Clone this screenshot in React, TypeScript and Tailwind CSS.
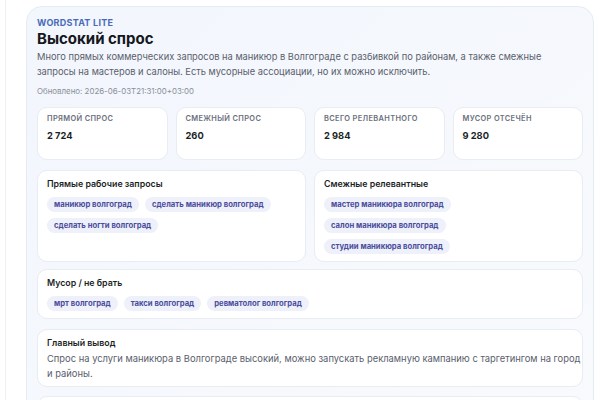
import React from "react";

const stats = [
  { label: "Прямой спрос", value: "2 724" },
  { label: "Смежный спрос", value: "260" },
  { label: "Всего релевантного", value: "2 984" },
  { label: "Мусор отсечён", value: "9 280" },
];

function Chip({ children }: { children: React.ReactNode }) {
  return (
    <span className="inline-flex h-[15px] items-center rounded-full bg-[#eef0fa] px-[7px] text-[7.7px] font-bold text-[#4b4d9c]">
      {children}
    </span>
  );
}

function Panel({ title, children, className = "" }: { title: string; children: React.ReactNode; className?: string }) {
  return (
    <div className={`rounded-[10px] border border-[#e8ecf3] bg-white px-[9px] pt-[7px] ${className}`}>
      <div className="text-[8.8px] font-semibold leading-[12px] text-[#1c1f26]">{title}</div>
      {children}
    </div>
  );
}

export default function App() {
  return (
    <div className="h-[400px] w-[600px] overflow-hidden bg-white pl-[5px] font-['Inter',sans-serif]">
      <div className="h-full border-l border-[#eef0f4] pl-[20px] pr-[6px] pt-[6px]">
        <div className="rounded-[16px] border border-[#e6ebf3] bg-gradient-to-br from-[#f2f6fd] to-[#f9fafc] px-[10px] pt-[10px] pb-[12px]">
          <div className="text-[9px] font-bold uppercase leading-[11px] tracking-[0.03em] text-[#4a6bb8]">Wordstat Lite</div>
          <h1 className="mt-[2px] text-[15px] font-bold leading-[18px] text-[#15171c]">Высокий спрос</h1>
          <p className="mt-[1px] text-[9.3px] leading-[15px] text-[#5a606c]">
            Много прямых коммерческих запросов на маникюр в Волгограде с разбивкой по районам, а также смежные
            <br />
            запросы на мастеров и салоны. Есть мусорные ассоциации, но их можно исключить.
          </p>
          <div className="mt-[7px] text-[7.9px] leading-[11px] text-[#8a8f9a]">Обновлено: 2026-06-03T21:31:00+03:00</div>

          <div className="mt-[10px] grid grid-cols-4 gap-[8px]">
            {stats.map((s) => (
              <div key={s.label} className="h-[53px] rounded-[10px] border border-[#e8ecf3] bg-white px-[9px] pt-[6px]">
                <div className="text-[7.4px] font-semibold uppercase leading-[10px] tracking-[0.05em] text-[#6b707c]">{s.label}</div>
                <div className="mt-[5px] text-[9.3px] font-bold leading-[14px] text-[#1c1f26]">{s.value}</div>
              </div>
            ))}
          </div>

          <div className="mt-[10px] grid grid-cols-2 gap-[8px]">
            <Panel title="Прямые рабочие запросы" className="h-[92px]">
              <div className="mt-[7px] flex flex-wrap gap-x-[6px] gap-y-[6px]">
                <Chip>маникюр волгоград</Chip>
                <Chip>сделать маникюр волгоград</Chip>
                <Chip>сделать ногти волгоград</Chip>
              </div>
            </Panel>
            <Panel title="Смежные релевантные" className="h-[92px]">
              <div className="mt-[7px] flex flex-col items-start gap-[6px]">
                <Chip>мастер маникюра волгоград</Chip>
                <Chip>салон маникюра волгоград</Chip>
                <Chip>студии маникюра волгоград</Chip>
              </div>
            </Panel>
          </div>

          <Panel title="Мусор / не брать" className="mt-[7px] h-[50px]">
            <div className="mt-[7px] flex flex-wrap gap-[6px]">
              <Chip>мрт волгоград</Chip>
              <Chip>такси волгоград</Chip>
              <Chip>ревматолог волгоград</Chip>
            </div>
          </Panel>

          <Panel title="Главный вывод" className="mt-[10px] h-[58px]">
            <p className="mt-[2px] whitespace-nowrap text-[9.4px] leading-[15px] text-[#5a606c]">
              Спрос на услуги маникюра в Волгограде высокий, можно запускать рекламную кампанию с таргетингом на город
              <br />
              и районы.
            </p>
          </Panel>

          <div className="mt-[9px] h-[60px] rounded-[10px] border border-[#e8ecf3] bg-white" />
        </div>
      </div>
    </div>
  );
}
